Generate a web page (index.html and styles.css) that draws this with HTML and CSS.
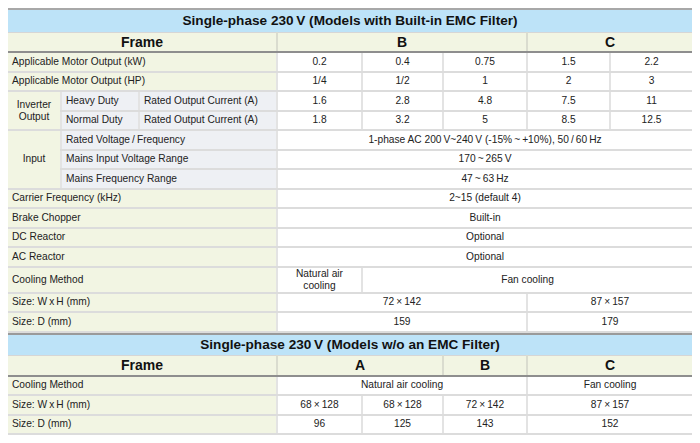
FILE: index.html
```html
<!DOCTYPE html>
<html>
<head>
<meta charset="utf-8">
<link rel="stylesheet" href="styles.css">
</head>
<body>
<table class="spec">
  <colgroup>
    <col class="c-a"><col class="c-b"><col class="c-c">
    <col class="d1"><col class="d2"><col class="d3"><col class="d4"><col class="d5">
  </colgroup>
  <tr class="title"><td colspan="8">Single-phase 230&thinsp;V (Models with Built-in EMC Filter)</td></tr>
  <tr class="frame"><td colspan="3">Frame</td><td colspan="3">B</td><td colspan="2">C</td></tr>
  <tr><td colspan="3" class="lab">Applicable Motor Output (kW)</td><td>0.2</td><td>0.4</td><td>0.75</td><td>1.5</td><td>2.2</td></tr>
  <tr><td colspan="3" class="lab">Applicable Motor Output (HP)</td><td>1/4</td><td>1/2</td><td>1</td><td>2</td><td>3</td></tr>
  <tr><td rowspan="2" class="grp">Inverter<br>Output</td><td class="sub">Heavy Duty</td><td class="sub">Rated Output Current (A)</td><td>1.6</td><td>2.8</td><td>4.8</td><td>7.5</td><td>11</td></tr>
  <tr><td class="sub">Normal Duty</td><td class="sub">Rated Output Current (A)</td><td>1.8</td><td>3.2</td><td>5</td><td>8.5</td><td>12.5</td></tr>
  <tr><td rowspan="3" class="grp">Input</td><td colspan="2" class="sub">Rated Voltage&thinsp;/&thinsp;Frequency</td><td colspan="5">1-phase AC 200&thinsp;V~240&thinsp;V (-15%&thinsp;~&thinsp;+10%), 50&thinsp;/&thinsp;60&thinsp;Hz</td></tr>
  <tr><td colspan="2" class="sub">Mains Input Voltage Range</td><td colspan="5">170&thinsp;~&thinsp;265&thinsp;V</td></tr>
  <tr><td colspan="2" class="sub">Mains Frequency Range</td><td colspan="5">47&thinsp;~&thinsp;63&thinsp;Hz</td></tr>
  <tr><td colspan="3" class="lab">Carrier Frequency (kHz)</td><td colspan="5">2~15 (default 4)</td></tr>
  <tr><td colspan="3" class="lab">Brake Chopper</td><td colspan="5">Built-in</td></tr>
  <tr><td colspan="3" class="lab">DC Reactor</td><td colspan="5">Optional</td></tr>
  <tr><td colspan="3" class="lab">AC Reactor</td><td colspan="5">Optional</td></tr>
  <tr class="tall"><td colspan="3" class="lab">Cooling Method</td><td>Natural air<br>cooling</td><td colspan="4">Fan cooling</td></tr>
  <tr><td colspan="3" class="lab">Size: W&thinsp;x&thinsp;H (mm)</td><td colspan="3">72&thinsp;×&thinsp;142</td><td colspan="2">87&thinsp;×&thinsp;157</td></tr>
  <tr><td colspan="3" class="lab">Size: D (mm)</td><td colspan="3">159</td><td colspan="2">179</td></tr>
</table>
<table class="spec second">
  <colgroup>
    <col class="c-a"><col class="c-b"><col class="c-c">
    <col class="d1"><col class="d2"><col class="d3"><col class="d4"><col class="d5">
  </colgroup>
  <tr class="title t2"><td colspan="8">Single-phase 230&thinsp;V (Models w/o an EMC Filter)</td></tr>
  <tr class="frame"><td colspan="3">Frame</td><td colspan="2">A</td><td>B</td><td colspan="2">C</td></tr>
  <tr><td colspan="3" class="lab">Cooling Method</td><td colspan="3">Natural air cooling</td><td colspan="2">Fan cooling</td></tr>
  <tr><td colspan="3" class="lab">Size: W&thinsp;x&thinsp;H (mm)</td><td>68&thinsp;×&thinsp;128</td><td>68&thinsp;×&thinsp;128</td><td>72&thinsp;×&thinsp;142</td><td colspan="2">87&thinsp;×&thinsp;157</td></tr>
  <tr><td colspan="3" class="lab">Size: D (mm)</td><td>96</td><td>125</td><td>143</td><td colspan="2">152</td></tr>
</table>
</body>
</html>
```

FILE: styles.css
```css
body {
  margin: 8px;
  background: #ffffff;
  font-family: "Liberation Sans", Arial, sans-serif;
}

.spec {
  width: 684px;
  border-collapse: collapse;
  table-layout: fixed;
  font-size: 10.2px;
  color: #222222;
  border-top: 2px solid #a8a8a8;
  border-left: hidden;
  border-right: hidden;
}

.c-a { width: 53px; }
.c-b { width: 78px; }
.c-c { width: 138px; }
.d1 { width: 85px; }
.d2 { width: 81px; }
.d3 { width: 84px; }
.d4 { width: 83px; }
.d5 { width: 82px; }

.spec tr { height: 19.5px; }

.spec td {
  padding: 0 4px;
  line-height: 12px;
  text-align: center;
  vertical-align: middle;
  border-bottom: 2px solid #dcdcdc;
  border-left: 2px solid #e3e3e3;
  white-space: nowrap;
  overflow: hidden;
}

.spec .title { height: 23px; }
.spec .title td {
  background: #bde3f8;
  font-size: 13.6px;
  font-weight: bold;
  color: #111111;
  border-bottom: 1px solid #d6d6d6;
}
.spec .t2 { height: 22px; }

.spec .frame { height: 20px; }
.spec .frame td {
  background: #f2f5e3;
  font-size: 14px;
  font-weight: bold;
  color: #111111;
  border-bottom: 2px solid #8e8e8e;
  border-left: 2px solid #dadccf;
}

.spec .lab {
  text-align: left;
  background: #f2f5e3;
}

.spec .grp {
  background: #f2f5e3;
  white-space: normal;
}

.spec .sub {
  text-align: left;
  background: #eef0f4;
}

.spec .tall { height: 25px; }
.spec .tall td { white-space: normal; }

.second { border-top: 2px solid #9a9a9a; }
```
